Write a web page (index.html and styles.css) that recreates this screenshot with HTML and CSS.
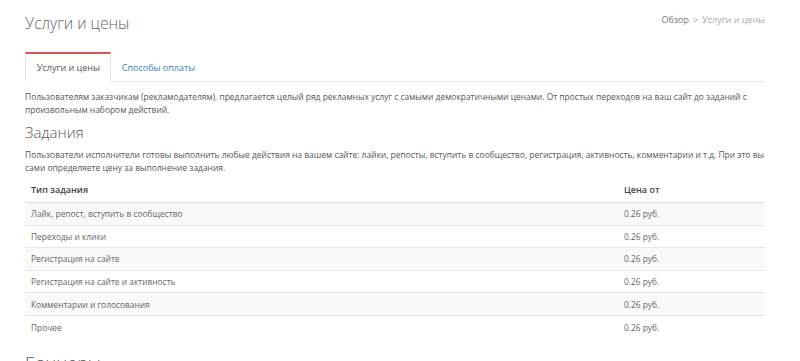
FILE: index.html
```html
<!DOCTYPE html>
<html lang="ru">
<head>
  <meta charset="UTF-8">
  <meta name="viewport" content="width=device-width, initial-scale=1.0">
  <title>Услуги и цены</title>
  <link rel="stylesheet" href="styles.css">
</head>
<body>
  <div class="page">
    <!-- Header -->
    <div class="page__header">
      <h1 class="page__title">Услуги и цены</h1>
      <div class="crumbs">
        <span class="crumbs__link">Обзор</span>
        <span class="crumbs__sep">&gt;</span>
        <span class="crumbs__current">Услуги и цены</span>
      </div>
    </div>

    <!-- Tabs -->
    <ul class="tabs">
      <li class="tabs__item tabs__item--active">Услуги и цены</li>
      <li class="tabs__item">Способы оплаты</li>
      <li class="tabs__rest"></li>
    </ul>

    <p class="text">Пользователям заказчикам (рекламодателям), предлагается целый ряд рекламных услуг с самыми демократичными ценами. От простых переходов на ваш сайт до заданий с произвольным набором действий.</p>

    <h2 class="section__title">Задания</h2>
    <p class="text">Пользователи исполнители готовы выполнить любые действия на вашем сайте: лайки, репосты, вступить в сообщество, регистрация, активность, комментарии и т.д. При это вы сами определяете цену за выполнение задания.</p>

    <table class="prices">
      <thead>
        <tr>
          <th>Тип задания</th>
          <th class="prices__col">Цена от</th>
        </tr>
      </thead>
      <tbody>
        <tr><td>Лайк, репост, вступить в сообщество</td><td>0.26 руб.</td></tr>
        <tr><td>Переходы и клики</td><td>0.26 руб.</td></tr>
        <tr><td>Регистрация на сайте</td><td>0.26 руб.</td></tr>
        <tr><td>Регистрация на сайте и активность</td><td>0.26 руб.</td></tr>
        <tr><td>Комментарии и голосования</td><td>0.26 руб.</td></tr>
        <tr><td>Прочее</td><td>0.26 руб.</td></tr>
      </tbody>
    </table>

    <h2 class="section__title section__title--big">Баннеры</h2>
  </div>
</body>
</html>
```

FILE: styles.css
```css
/* Reset */
*, *::after, *::before {
  margin: 0;
  padding: 0;
  box-sizing: border-box;
}

body {
  background-color: #fff;
  font-family: 'Open Sans', sans-serif;
  color: #555;
  overflow: hidden;
}

.page {
  padding: 0 35px 0 25px;
}

.page__header {
  display: flex;
  justify-content: space-between;
  align-items: flex-start;
  height: 52px;
  padding-top: 12px;
}

.page__title {
  font-size: 15.6px;
  font-weight: 300;
  color: #666;
  line-height: 22px;
}

.crumbs {
  font-size: 9px;
  line-height: 13px;
  padding-top: 1px;
  display: flex;
  gap: 4px;
}

.crumbs__link {
  color: #777;
}

.crumbs__sep,
.crumbs__current {
  color: #aaa;
}

.tabs {
  list-style: none;
  display: flex;
  height: 30px;
}

.tabs__item {
  font-size: 9px;
  line-height: 27px;
  padding: 0 11px 0 11px;
  color: #3f7dbf;
  border-bottom: 1px solid #e5e5e5;
  border-top: 2px solid transparent;
}

.tabs__item--active {
  color: #555;
  border: 1px solid #e5e5e5;
  border-top: 2px solid #e3534e;
  border-bottom-color: transparent;
  padding: 0 10px 0 11px;
}

.tabs__rest {
  flex: 1;
  border-bottom: 1px solid #e5e5e5;
}

.text {
  font-size: 8.45px;
  line-height: 13px;
  margin-top: 8px;
}

.section__title {
  font-size: 15px;
  font-weight: 300;
  color: #555;
  line-height: 20px;
  margin-top: 6px;
}

.section__title + .text {
  margin-top: 6px;
}

.prices {
  width: 100%;
  border-collapse: collapse;
  margin-top: 3px;
  font-size: 8.4px;
}

.prices th {
  text-align: left;
  font-weight: 600;
  font-size: 9px;
  color: #444;
  padding: 6px 6px;
  border-bottom: 1px solid #ddd;
}

.prices__col {
  width: 147px;
}

.prices td {
  padding: 0 6px;
  height: 22.6px;
  color: #666;
  border-top: 1px solid #e6e6e6;
}

.prices tbody tr:first-child td {
  border-top: 0;
}

.prices tbody tr:nth-child(odd) {
  background-color: #f9f9f9;
}

.section__title--big {
  margin-top: 15px;
  font-size: 18px;
}
```
